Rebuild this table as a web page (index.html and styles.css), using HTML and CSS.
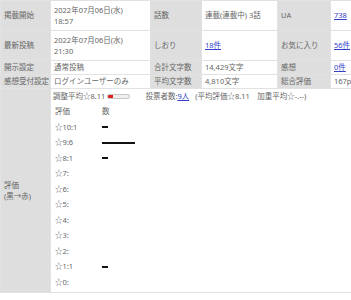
FILE: index.html
```html
<!DOCTYPE html>
<html lang="ja">
<head>
<meta charset="utf-8">
<link rel="stylesheet" href="styles.css">
</head>
<body>
<table class="info">
<colgroup>
<col class="c1"><col class="c2"><col class="c3"><col class="c4"><col class="c5"><col class="c6">
</colgroup>
<tr class="tall">
<th>掲載開始</th><td>2022年07月06日(水)<br>18:57</td>
<th>話数</th><td>連載(連載中) 3話</td>
<th>UA</th><td><a href="#">738</a></td>
</tr>
<tr class="tall">
<th>最新投稿</th><td>2022年07月06日(水)<br>21:30</td>
<th>しおり</th><td><a href="#">18件</a></td>
<th>お気に入り</th><td><a href="#">56件</a></td>
</tr>
<tr class="short">
<th>開示設定</th><td>通常投稿</td>
<th>合計文字数</th><td>14,429文字</td>
<th>感想</th><td><a href="#">0件</a></td>
</tr>
<tr class="short">
<th>感想受付設定</th><td>ログインユーザーのみ</td>
<th>平均文字数</th><td>4,810文字</td>
<th>総合評価</th><td>167pt</td>
</tr>
<tr class="rate">
<th>評価<br>(黒→赤)</th>
<td colspan="5">
<div class="summary">
<span>調整平均☆8.11</span>
<span class="meter"><span class="meter-fill"></span></span>
<span class="voters">投票者数:<a href="#">9人</a></span>
<span class="avg">(平均評価☆8.11　加重平均☆-.--)</span>
</div>
<table class="dist">
<tr><td class="k">評価</td><td>数</td></tr>
<tr><td class="k">☆10:1</td><td><span class="bar" style="width:5.6px"></span></td></tr>
<tr><td class="k">☆9:6</td><td><span class="bar" style="width:33.3px"></span></td></tr>
<tr><td class="k">☆8:1</td><td><span class="bar" style="width:5.6px"></span></td></tr>
<tr><td class="k">☆7:</td><td></td></tr>
<tr><td class="k">☆6:</td><td></td></tr>
<tr><td class="k">☆5:</td><td></td></tr>
<tr><td class="k">☆4:</td><td></td></tr>
<tr><td class="k">☆3:</td><td></td></tr>
<tr><td class="k">☆2:</td><td></td></tr>
<tr><td class="k">☆1:1</td><td><span class="bar" style="width:5.6px"></span></td></tr>
<tr><td class="k">☆0:</td><td></td></tr>
</table>
</td>
</tr>
</table>
</body>
</html>
```

FILE: styles.css
```css
html, body {
  margin: 0;
  padding: 0;
  overflow: hidden;
  background: #fff;
}
body {
  font-family: "Noto Sans", "Noto Sans CJK JP", sans-serif;
  font-size: 7.5px;
  line-height: 11px;
  color: #666;
}
a { color: #3340c8; text-decoration: underline; }
.info {
  border-collapse: collapse;
  table-layout: fixed;
  width: 372px;
}
.c1 { width: 50px; }
.c2 { width: 100px; }
.c3 { width: 51px; }
.c4 { width: 76px; }
.c5 { width: 53px; }
.c6 { width: 42px; }
.info > tbody > tr > th,
.info > tbody > tr > td {
  border: 1px solid #e2e2e2;
  padding: 0 3px;
  text-align: left;
  vertical-align: middle;
  font-weight: normal;
  white-space: nowrap;
}
.info > tbody > tr > th {
  background: #dedede;
}
.tall > th, .tall > td { height: 29px; }
.short > th, .short > td { height: 13px; }
.info > tbody > .rate > td { padding: 1px 2px 2px; height: 199px; vertical-align: top; }
.summary {
  display: flex;
  align-items: center;
  height: 13px;
  white-space: nowrap;
}
.meter {
  display: inline-block;
  width: 21px;
  height: 3px;
  margin-left: 2px;
  border: 1px solid #c8c8c8;
  border-radius: 2px;
  background: #eee;
  overflow: hidden;
}
.meter-fill {
  display: block;
  width: 5px;
  height: 3px;
  background: #e02020;
}
.voters { margin-left: 15px; }
.avg { margin-left: 6px; }
.dist {
  border-collapse: collapse;
  margin-top: 1px;
}
.dist td {
  padding: 0 0 0 2px;
  height: 15.5px;
  vertical-align: middle;
  white-space: nowrap;
}
.dist td.k { width: 45px; }
.bar {
  display: block;
  height: 2px;
  background: #111;
}
```
